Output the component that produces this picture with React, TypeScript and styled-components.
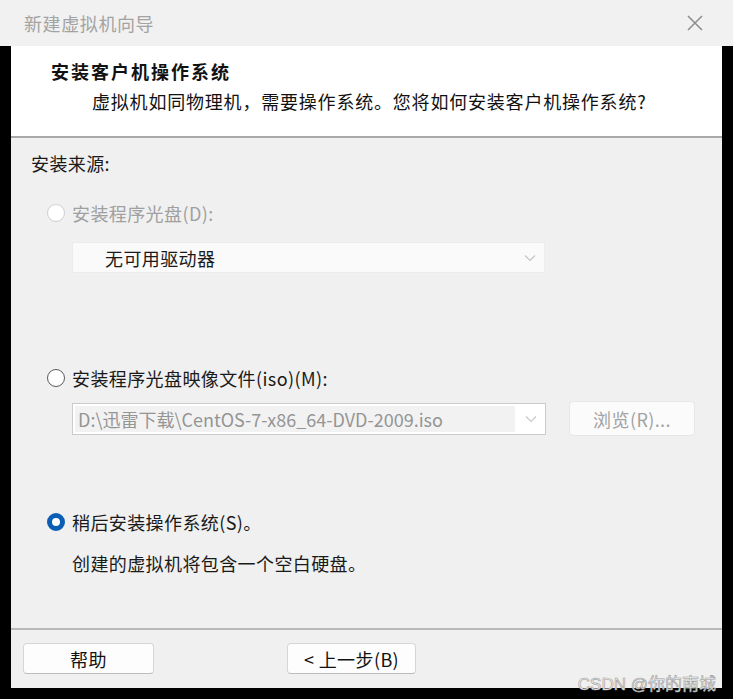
import styled, { createGlobalStyle } from "styled-components";

const GlobalStyle = createGlobalStyle`
  html, body {
    margin: 0;
    padding: 0;
    background: #000;
  }
  body {
    font-family: "Noto Sans CJK SC", "Noto Sans", sans-serif;
  }
`;

const Window = styled.div`
  width: 733px;
  height: 699px;
  display: flex;
  flex-direction: column;
  background: #000;
  position: relative;
  overflow: hidden;
`;

const TitleBar = styled.div`
  height: 46px;
  flex-shrink: 0;
  background: #f1f1f1;
  display: flex;
  align-items: center;
  justify-content: space-between;
  padding: 0 30px 0 24px;
`;

const TitleText = styled.span`
  font-size: 18px;
  letter-spacing: 0.6px;
  color: #a3a3a3;
`;

const Frame = styled.div`
  flex: 1;
  padding: 0 11px 11px 11px;
  display: flex;
  flex-direction: column;
`;

const Panel = styled.div`
  flex: 1;
  display: flex;
  flex-direction: column;
  background: #f0f0f0;
`;

const Header = styled.div`
  height: 92px;
  box-sizing: border-box;
  background: #fff;
  border-bottom: 2px solid #a9a9a9;
  padding: 13px 0 0 40px;
`;

const HeaderTitle = styled.div`
  font-size: 18px;
  font-weight: 700;
  line-height: 24px;
  letter-spacing: 2px;
  color: #111;
`;

const HeaderSub = styled.div`
  margin: 6px 0 0 41px;
  font-size: 18px;
  line-height: 24px;
  letter-spacing: 0.8px;
  color: #111;
`;

const Body = styled.div`
  flex: 1;
  padding: 13px 0 0 20px;
  display: flex;
  flex-direction: column;
  align-items: flex-start;
`;

const Line = styled.div<{ $mt?: number; $indent?: number }>`
  margin-top: ${p => p.$mt ?? 0}px;
  margin-left: ${p => p.$indent ?? 0}px;
  font-size: 18px;
  line-height: 24px;
  letter-spacing: 0.4px;
  color: #1a1a1a;
`;

const RadioRow = styled.label<{ $mt: number; $disabled?: boolean }>`
  margin-top: ${p => p.$mt}px;
  margin-left: 16px;
  display: flex;
  align-items: center;
  gap: 7px;
  font-size: 18px;
  line-height: 24px;
  letter-spacing: 0.4px;
  color: ${p => (p.$disabled ? "#a0a0a0" : "#1a1a1a")};
`;

const RadioDot = styled.span<{ $checked?: boolean; $disabled?: boolean }>`
  width: 18px;
  height: 18px;
  box-sizing: border-box;
  border-radius: 50%;
  background: #fff;
  border: ${p =>
    p.$checked
      ? "5px solid #0a5fb4"
      : p.$disabled
      ? "1.5px solid #cfcfcf"
      : "1.5px solid #5a5a5a"};
`;

const Select = styled.div<{ $mt: number }>`
  margin: ${p => p.$mt}px 0 0 41px;
  width: 473px;
  height: 31px;
  box-sizing: border-box;
  background: #fafafa;
  border: 1px solid #ececec;
  display: flex;
  align-items: center;
  justify-content: space-between;
  padding: 0 8px 0 32px;
  font-size: 18px;
  letter-spacing: 0.4px;
  color: #1a1a1a;
`;

const PathRow = styled.div<{ $mt: number }>`
  margin: ${p => p.$mt}px 0 0 41px;
  display: flex;
  align-items: center;
  gap: 23px;
`;

const Combo = styled.div`
  width: 474px;
  height: 32px;
  box-sizing: border-box;
  background: #fff;
  border: 1px solid #cbcbcb;
  display: flex;
  align-items: center;
  padding: 2px 8px 2px 2px;
`;

const ComboField = styled.div`
  width: 442px;
  height: 100%;
  background: #f2f2f2;
  display: flex;
  align-items: center;
  padding-left: 3px;
  box-sizing: border-box;
  font-size: 18px;
  color: #959595;
  margin-right: 10px;
`;

const BrowseButton = styled.button`
  width: 126px;
  height: 35px;
  border-radius: 4px;
  background: #fbfbfb;
  border: 1px solid #e6e6e6;
  font-family: inherit;
  font-size: 18px;
  letter-spacing: 0.4px;
  color: #a2a2a2;
`;

const Footer = styled.div`
  height: 60px;
  box-sizing: border-box;
  border-top: 2px solid #b9b9b9;
  display: flex;
  padding: 13px 0 0 12px;
  gap: 133px;
`;

const FooterButton = styled.button<{ $w: number }>`
  width: ${p => p.$w}px;
  height: 31px;
  border-radius: 4px;
  background: #fdfdfd;
  border: 1px solid #d6d6d6;
  border-bottom-color: #bcbcbc;
  font-family: inherit;
  font-size: 18px;
  letter-spacing: 0.4px;
  color: #111;
  padding: 0;
`;

const Watermark = styled.div`
  position: absolute;
  right: 17px;
  bottom: 4px;
  font-family: "Liberation Sans", "Noto Sans CJK SC", sans-serif;
  font-size: 17px;
  color: #f4f4f4;
  -webkit-text-stroke: 0.6px #9a9a9a;
`;

const Chevron = ({ color }: { color: string }) => (
  <svg width="12" height="8" viewBox="0 0 12 8">
    <path d="M1 1.5 L6 6.5 L11 1.5" fill="none" stroke={color} strokeWidth="1.2" />
  </svg>
);

const CloseIcon = () => (
  <svg width="16" height="16" viewBox="0 0 16 16">
    <path d="M1 1 L15 15 M15 1 L1 15" stroke="#8c8c8c" strokeWidth="1.5" />
  </svg>
);

export default function App() {
  return (
    <Window>
      <GlobalStyle />
      <TitleBar>
        <TitleText>新建虚拟机向导</TitleText>
        <CloseIcon />
      </TitleBar>
      <Frame>
        <Panel>
          <Header>
            <HeaderTitle>安装客户机操作系统</HeaderTitle>
            <HeaderSub>虚拟机如同物理机，需要操作系统。您将如何安装客户机操作系统?</HeaderSub>
          </Header>
          <Body>
            <Line>安装来源:</Line>
            <RadioRow $mt={26} $disabled>
              <RadioDot $disabled />
              安装程序光盘(D):
            </RadioRow>
            <Select $mt={17}>
              无可用驱动器
              <Chevron color="#c4c4c4" />
            </Select>
            <RadioRow $mt={93}>
              <RadioDot />
              安装程序光盘映像文件(iso)(M):
            </RadioRow>
            <PathRow $mt={11}>
              <Combo>
                <ComboField>D:\迅雷下载\CentOS-7-x86_64-DVD-2009.iso</ComboField>
                <Chevron color="#c8c8c8" />
              </Combo>
              <BrowseButton>浏览(R)...</BrowseButton>
            </PathRow>
            <RadioRow $mt={74}>
              <RadioDot $checked />
              稍后安装操作系统(S)。
            </RadioRow>
            <Line $mt={17} $indent={41}>创建的虚拟机将包含一个空白硬盘。</Line>
          </Body>
          <Footer>
            <FooterButton $w={131}>帮助</FooterButton>
            <FooterButton $w={129}>&lt; 上一步(B)</FooterButton>
          </Footer>
        </Panel>
      </Frame>
      <Watermark>CSDN @你的南城</Watermark>
    </Window>
  );
}
